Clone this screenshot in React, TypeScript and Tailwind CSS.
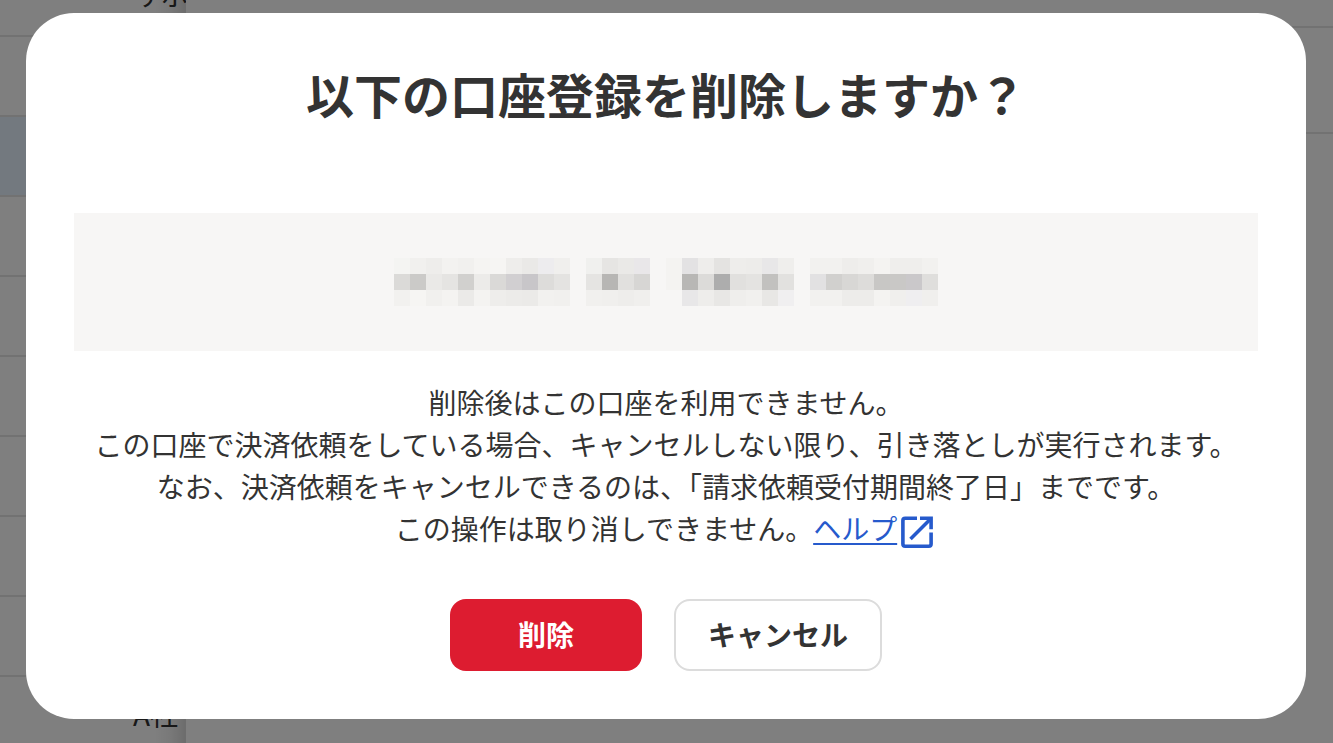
const rows = [
  { name: "サポ", active: false },
  { name: "", active: false },
  { name: "", active: true },
  { name: "", active: false },
  { name: "", active: false },
  { name: "", active: false },
  { name: "", active: false },
  { name: "", active: false },
  { name: "", active: false },
  { name: "A社", active: false },
]

// masked account number, one colour per tile
const mosaic = [
  "f4f4f2 f1f0ee eeedeb f3f2f0 f1f0ee f5f4f2 f6f5f3 eeedeb eae9e7 edecee f0efed f7f6f5 f0f0ee e6e5e3 eae9e7 e9e7e9 f7f6f5 f4f3f1 e3e2e3 eeedeb e4e3e1 eeedeb edecea e8e7e8 efeeec f7f6f5 f2f1ef f2f1ef eeedeb f0efed f4f3f1 efeeec efeeec f2f1ef",
  "dbdad8 cbcac8 eae9e7 e5e4e2 d1d0ce ecebe9 dad9d7 d1cfd1 c8c6c9 dddcda e4e3e1 f7f6f5 e5e4e2 b7b6b4 e1e0de d7d6d4 f7f6f5 f4f3f1 b8b7b5 dcdbd9 adadad e1e0de e4e3e1 c2c1bf e2e1df f7f6f5 e2e1e2 d1d0ce d8d7d5 dddcda c8c7c5 c9c8c6 cac8ca dfdedc",
  "f2f1ef f6f5f3 f1f0ee f4f3f1 ebeae8 f4f3f1 eeedeb ecebe9 ebeae8 f2f1ef f1f0ee f7f6f5 f1f0ee f0efed eeedeb f0efed f7f6f5 f7f6f5 e8e7e8 eeedeb e8e7e5 efeeec f1f0ee e8e7e5 f0eff0 f7f6f5 f2f1ef f2f1ef edecea edecea f4f3f1 f0efed efeef0 f0efed",
].map((line) => line.split(" "))

const MaskedAccount = () => {
  return (
    <svg width="544" height="48" viewBox="0 0 544 48" shapeRendering="crispEdges" aria-hidden="true">
      {mosaic.map((line, y) =>
        line.map((color, x) => (
          <rect key={`${x}-${y}`} x={x * 16} y={y * 16} width="16" height="16" fill={`#${color}`} />
        ))
      )}
    </svg>
  )
}

const ExternalIcon = () => {
  return (
    <svg
      className="inline-block mx-1 align-middle"
      width="32"
      height="32"
      viewBox="0 0 32 32"
      fill="none"
      stroke="currentColor"
      strokeWidth="3.6"
      aria-hidden="true"
    >
      <path d="M16 2.3H4.2Q1.9 2.3 1.9 4.6V28Q1.9 30.2 4.2 30.2H27.8Q30.1 30.2 30.1 28V16.5" />
      <path d="M19 2.3H30.1V13.3" />
      <path d="M9.5 22.9L29.5 2.9" />
    </svg>
  )
}

const Background = () => {
  return (
    <div className="flex h-full bg-white">
      <aside className="relative w-[186px] shrink-0 overflow-hidden">
        <ul className="-mt-[43px]">
          {rows.map((row, i) => (
            <li
              key={i}
              className={`flex h-20 items-center border-b-2 border-[#e4e4e4] bg-clip-padding pb-1 pl-[133px] text-[28px] whitespace-nowrap ${
                row.active ? "bg-[#e6f3ff]" : ""
              }`}
            >
              {row.name}
            </li>
          ))}
        </ul>
        <div className="absolute inset-y-0 right-0 w-8 bg-linear-to-r from-transparent via-black/5 to-black/15" />
      </aside>
      <main className="flex-1">
        <div className="h-7 border-b-2 border-[#e4e4e4]" />
        <div className="h-[106px] border-b-2 border-[#e4e4e4]" />
      </main>
    </div>
  )
}

const App = () => {
  return (
    <div className="relative h-screen overflow-hidden font-['Noto_Sans_CJK_JP',sans-serif] text-[#333333]">
      <Background />
      <div className="absolute inset-0 bg-black/50 pt-[13px] pr-[27px] pl-[26px]">
        <div
          role="dialog"
          aria-modal="true"
          aria-labelledby="title"
          className="mx-auto max-w-7xl rounded-[48px] bg-white p-12 text-center"
        >
          <h1 id="title" className="text-5xl leading-[64px] font-bold">
            以下の口座登録を削除しますか？
          </h1>
          <div className="mt-[88px] flex justify-center bg-[#f7f6f5] py-[45px]">
            <MaskedAccount />
          </div>
          <p className="mt-[30px] text-[28px] leading-[42px]">
            削除後はこの口座を利用できません。
            <br />
            この口座で決済依頼をしている場合、キャンセルしない限り、引き落としが実行されます。
            <br />
            なお、決済依頼をキャンセルできるのは、「請求依頼受付期間終了日」までです。
            <br />
            この操作は取り消しできません。
            <a href="#help" className="text-[#265acc]">
              <span className="underline decoration-2 underline-offset-3">ヘルプ</span>
              <ExternalIcon />
            </a>
          </p>
          <div className="mt-[50px] flex justify-center gap-8 text-[28px] font-bold">
            <button type="button" className="h-[72px] w-48 rounded-2xl bg-[#dd1c30] pb-0.5 text-white">
              削除
            </button>
            <button type="button" className="h-[72px] w-52 rounded-2xl border-2 border-[#dcdcdc] bg-white pb-0.5">
              キャンセル
            </button>
          </div>
        </div>
      </div>
    </div>
  )
}

export default App
